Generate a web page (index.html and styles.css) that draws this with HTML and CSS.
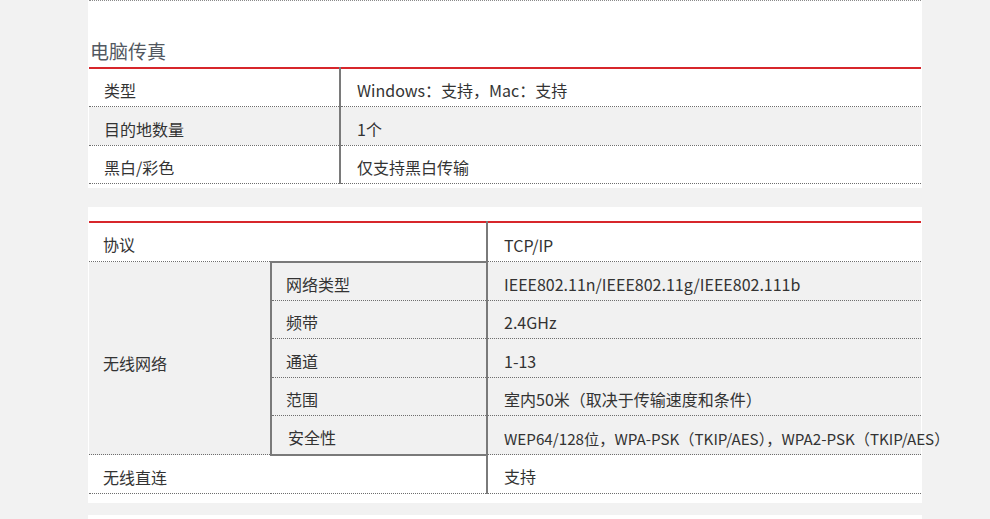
FILE: index.html
```html
<!DOCTYPE html>
<html lang="zh-CN">
<head>
<meta charset="utf-8">
<title>电脑传真 / 无线网络</title>
<link rel="stylesheet" href="styles.css">
</head>
<body>
<main class="page">
  <section class="panel panel-fax">
    <div class="prev-edge"></div>
    <h2 class="panel-title">电脑传真</h2>
    <table class="spec spec-fax">
      <colgroup><col class="c-label-wide"><col></colgroup>
      <tr>
        <td class="label">类型</td>
        <td class="value">Windows：支持，Mac：支持</td>
      </tr>
      <tr class="alt">
        <td class="label">目的地数量</td>
        <td class="value">1个</td>
      </tr>
      <tr>
        <td class="label">黑白/彩色</td>
        <td class="value">仅支持黑白传输</td>
      </tr>
    </table>
  </section>

  <section class="panel panel-wifi">
    <table class="spec spec-wifi">
      <colgroup><col class="c-label"><col class="c-sub"><col></colgroup>
      <tr>
        <td class="label" colspan="2">协议</td>
        <td class="value">TCP/IP</td>
      </tr>
      <tr class="alt">
        <td class="label group" rowspan="5">无线网络</td>
        <td class="sub first">网络类型</td>
        <td class="value">IEEE802.11n/IEEE802.11g/IEEE802.111b</td>
      </tr>
      <tr class="alt">
        <td class="sub">频带</td>
        <td class="value">2.4GHz</td>
      </tr>
      <tr class="alt">
        <td class="sub">通道</td>
        <td class="value">1-13</td>
      </tr>
      <tr class="alt">
        <td class="sub">范围</td>
        <td class="value">室内50米（取决于传输速度和条件）</td>
      </tr>
      <tr class="alt">
        <td class="sub last">安全性</td>
        <td class="value narrow">WEP64/128位，WPA-PSK（TKIP/AES），WPA2-PSK（TKIP/AES）</td>
      </tr>
      <tr>
        <td class="label" colspan="2">无线直连</td>
        <td class="value">支持</td>
      </tr>
    </table>
  </section>

  <section class="panel panel-next"></section>
</main>
</body>
</html>
```

FILE: styles.css
```css
html, body {
  margin: 0;
  padding: 0;
}

body {
  background: #f2f2f2;
  font-family: "Noto Sans CJK SC", "Noto Sans", sans-serif;
  color: #333;
  font-size: 16px;
}

.page {
  width: 834px;
  margin-left: 88px;
}

.panel {
  background: #fff;
  padding: 0 1px;
}

.panel-fax {
  padding-bottom: 4px;
  margin-bottom: 19px;
}

.panel-wifi {
  padding-top: 14px;
  padding-bottom: 9px;
  margin-bottom: 12px;
}

.panel-next {
  height: 40px;
}

.prev-edge {
  border-top: 1px dotted #8a8a8a;
}

.panel-title {
  margin: 0;
  padding: 37px 0 3px 1px;
  font-size: 19px;
  line-height: 26px;
  font-weight: normal;
  color: #525861;
}

.spec {
  width: 100%;
  table-layout: fixed;
  border-collapse: collapse;
  border-top: 2px solid #d7262b;
}

.spec td {
  height: 32.4px;
  padding: 5px 0 0 14px;
  line-height: 24px;
  vertical-align: middle;
  border-bottom: 1px dotted #6e6e6e;
  white-space: nowrap;
}

.spec tr.alt td {
  background: #f1f1f1;
}

.c-label-wide { width: 251px; }
.c-label { width: 182px; }
.c-sub { width: 216px; }

.spec td.value {
  border-left: 2px solid #7a7a7a;
  padding-left: 16px;
}

.spec-fax td.label {
  padding-left: 15px;
}

.spec td.group {
  padding-top: 10px;
}

.spec td.sub {
  border-left: 2px solid #7a7a7a;
  padding-left: 14px;
}

.spec td.sub.first {
  border-top: 2px solid #7a7a7a;
}

.spec td.sub.last {
  border-bottom: 2px solid #7a7a7a;
  padding-left: 16px;
}

.spec td.narrow {
  font-size: 15.2px;
  overflow: visible;
}
```
